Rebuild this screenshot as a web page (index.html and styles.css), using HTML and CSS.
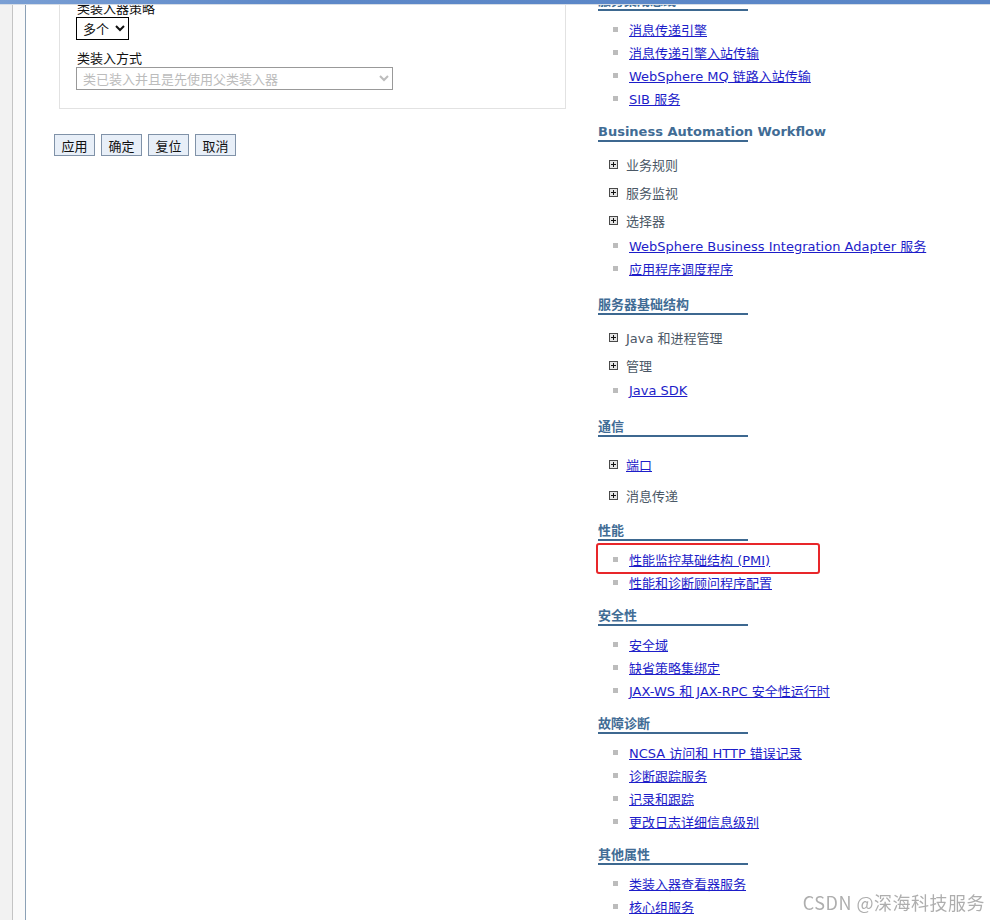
FILE: index.html
```html
<!DOCTYPE html>
<html lang="zh-CN">
<head>
  <meta charset="UTF-8">
  <meta name="viewport" content="width=device-width, initial-scale=1.0">
  <title>类装入器配置</title>
  <link rel="stylesheet" href="styles.css">
</head>
<body>
  <div class="topbar"></div>

  <div class="page">
    <div class="rail"></div>

    <div class="form-col">
      <div class="form-box">
        <label class="field-label" for="policy">类装入器策略</label>
        <select id="policy" class="select-small">
          <option>多个</option>
          <option>单个</option>
        </select>

        <label class="field-label second" for="mode">类装入方式</label>
        <select id="mode" class="select-wide" disabled>
          <option>类已装入并且是先使用父类装入器</option>
        </select>
      </div>

      <div class="buttons">
        <button class="btn">应用</button>
        <button class="btn">确定</button>
        <button class="btn">复位</button>
        <button class="btn">取消</button>
      </div>
    </div>

    <div class="side-col">
      <div class="section">
        <div class="section-head">服务集成总线</div>
        <ul class="links">
          <li class="link"><span class="dot"></span><a href="#">消息传递引擎</a></li>
          <li class="link"><span class="dot"></span><a href="#">消息传递引擎入站传输</a></li>
          <li class="link"><span class="dot"></span><a href="#">WebSphere MQ 链路入站传输</a></li>
          <li class="link"><span class="dot"></span><a href="#">SIB 服务</a></li>
        </ul>
      </div>

      <div class="section">
        <div class="section-head">Business Automation Workflow</div>
        <ul class="links mixed">
          <li class="exp"><svg class="plus" width="9" height="9" viewBox="0 0 9 9"><rect x="0.5" y="0.5" width="8" height="8" fill="#e4e4e4" stroke="#4a4a4a"/><path d="M2 4.5h5M4.5 2v5" stroke="#111" stroke-width="1"/></svg><span>业务规则</span></li>
          <li class="exp"><svg class="plus" width="9" height="9" viewBox="0 0 9 9"><rect x="0.5" y="0.5" width="8" height="8" fill="#e4e4e4" stroke="#4a4a4a"/><path d="M2 4.5h5M4.5 2v5" stroke="#111" stroke-width="1"/></svg><span>服务监视</span></li>
          <li class="exp"><svg class="plus" width="9" height="9" viewBox="0 0 9 9"><rect x="0.5" y="0.5" width="8" height="8" fill="#e4e4e4" stroke="#4a4a4a"/><path d="M2 4.5h5M4.5 2v5" stroke="#111" stroke-width="1"/></svg><span>选择器</span></li>
          <li class="link"><span class="dot"></span><a href="#">WebSphere Business Integration Adapter 服务</a></li>
          <li class="link"><span class="dot"></span><a href="#">应用程序调度程序</a></li>
        </ul>
      </div>

      <div class="section">
        <div class="section-head">服务器基础结构</div>
        <ul class="links mixed">
          <li class="exp"><svg class="plus" width="9" height="9" viewBox="0 0 9 9"><rect x="0.5" y="0.5" width="8" height="8" fill="#e4e4e4" stroke="#4a4a4a"/><path d="M2 4.5h5M4.5 2v5" stroke="#111" stroke-width="1"/></svg><span>Java 和进程管理</span></li>
          <li class="exp"><svg class="plus" width="9" height="9" viewBox="0 0 9 9"><rect x="0.5" y="0.5" width="8" height="8" fill="#e4e4e4" stroke="#4a4a4a"/><path d="M2 4.5h5M4.5 2v5" stroke="#111" stroke-width="1"/></svg><span>管理</span></li>
          <li class="link"><span class="dot"></span><a href="#">Java SDK</a></li>
        </ul>
      </div>

      <div class="section">
        <div class="section-head">通信</div>
        <ul class="links spaced">
          <li class="exp"><svg class="plus" width="9" height="9" viewBox="0 0 9 9"><rect x="0.5" y="0.5" width="8" height="8" fill="#e4e4e4" stroke="#4a4a4a"/><path d="M2 4.5h5M4.5 2v5" stroke="#111" stroke-width="1"/></svg><a href="#">端口</a></li>
          <li class="exp"><svg class="plus" width="9" height="9" viewBox="0 0 9 9"><rect x="0.5" y="0.5" width="8" height="8" fill="#e4e4e4" stroke="#4a4a4a"/><path d="M2 4.5h5M4.5 2v5" stroke="#111" stroke-width="1"/></svg><span>消息传递</span></li>
        </ul>
      </div>

      <div class="section">
        <div class="section-head">性能</div>
        <ul class="links">
          <li class="link marked"><span class="dot"></span><a href="#">性能监控基础结构 (PMI)</a></li>
          <li class="link"><span class="dot"></span><a href="#">性能和诊断顾问程序配置</a></li>
        </ul>
      </div>

      <div class="section">
        <div class="section-head">安全性</div>
        <ul class="links">
          <li class="link"><span class="dot"></span><a href="#">安全域</a></li>
          <li class="link"><span class="dot"></span><a href="#">缺省策略集绑定</a></li>
          <li class="link"><span class="dot"></span><a href="#">JAX-WS 和 JAX-RPC 安全性运行时</a></li>
        </ul>
      </div>

      <div class="section">
        <div class="section-head">故障诊断</div>
        <ul class="links">
          <li class="link"><span class="dot"></span><a href="#">NCSA 访问和 HTTP 错误记录</a></li>
          <li class="link"><span class="dot"></span><a href="#">诊断跟踪服务</a></li>
          <li class="link"><span class="dot"></span><a href="#">记录和跟踪</a></li>
          <li class="link"><span class="dot"></span><a href="#">更改日志详细信息级别</a></li>
        </ul>
      </div>

      <div class="section">
        <div class="section-head">其他属性</div>
        <ul class="links">
          <li class="link"><span class="dot"></span><a href="#">类装入器查看器服务</a></li>
          <li class="link"><span class="dot"></span><a href="#">核心组服务</a></li>
        </ul>
      </div>
    </div>
  </div>

  <div class="watermark">CSDN @深海科技服务</div>
</body>
</html>
```

FILE: styles.css
```css
body {
  margin: 0;
  background: #fff;
  font-family: 'DejaVu Sans', 'Noto Sans CJK SC', sans-serif;
  font-size: 13px;
  color: #111;
  overflow: hidden;
}

.topbar {
  position: fixed;
  top: 0;
  left: 0;
  right: 0;
  height: 4px;
  background: linear-gradient(to right, #7a9fd4, #5d88c8 30%, #5a86c7);
  border-bottom: 1px solid #d6dde6;
  z-index: 2;
}

/* page is scrolled a little: the top rows sit under the bar */
.page {
  display: grid;
  grid-template-columns: 26px 572px 1fr;
  margin-top: -7px;
  min-height: 940px;
}

.rail {
  background: linear-gradient(to right, #f2f2f2 0 12px, #c4c4c4 12px 13px, #fafafa 13px 25px, #8ca1b6 25px 26px);
}

.form-box {
  margin-left: 33px;
  width: 473px;
  border: 1px solid #e2e2e2;
  padding: 6px 16px 18px 16px;
  font-family: 'Noto Sans CJK SC', sans-serif;
}

.field-label {
  display: block;
  line-height: 16px;
  padding-left: 1px;
}

.field-label.second {
  margin-top: 10px;
}

.select-small,
.select-wide {
  display: block;
  height: 23px;
  margin-top: 1px;
  font-family: 'Noto Sans CJK SC', sans-serif;
  font-size: 13px;
  background: #fff;
  border-radius: 0;
  padding: 0 2px;
}

.select-small {
  width: 53px;
  border: 1px solid #000;
  color: #111;
}

.select-wide {
  width: 317px;
  border: 1px solid #6e6e6e;
  color: #a0a0a0;
}

.buttons {
  display: flex;
  gap: 6px;
  margin: 25px 0 0 28px;
}

.btn {
  width: 41px;
  height: 22px;
  padding: 0;
  font-family: 'Noto Sans CJK SC', sans-serif;
  font-size: 13px;
  color: #111;
  background: #e8eff8;
  border: 1px solid #8092a8;
  border-radius: 0;
}

.section + .section {
  margin-top: 14px;
}

.section-head {
  width: 150px;
  line-height: 16px;
  white-space: nowrap;
  font-weight: bold;
  color: #416c95;
  border-bottom: 2px solid #3d6890;
}

.links {
  list-style: none;
  margin: 7px 0 0;
  padding: 0;
}

.links.mixed {
  margin-top: 8px;
  padding-bottom: 3px;
}

.links.spaced {
  margin-top: 13px;
}

.links.spaced li + li {
  margin-top: 3px;
}

.link {
  display: flex;
  align-items: center;
  height: 23px;
  padding-left: 15px;
  position: relative;
}

.dot {
  width: 5px;
  height: 5px;
  background: #bcbcbc;
  margin-right: 11px;
}

.exp {
  display: flex;
  align-items: center;
  height: 28px;
  padding-left: 11px;
  color: #4b5866;
}

.plus {
  margin-right: 8px;
}

.links a {
  color: #1d1dc9;
  text-decoration: underline;
}

.marked::after {
  content: '';
  position: absolute;
  left: -2px;
  top: -5px;
  width: 220px;
  height: 27px;
  border: 2px solid #e8262a;
  border-radius: 3px;
}

.watermark {
  position: fixed;
  right: 5px;
  bottom: 5px;
  font-family: 'Noto Sans CJK SC', sans-serif;
  font-size: 18px;
  letter-spacing: 0.5px;
  color: rgba(140, 140, 140, 0.7);
}
```
